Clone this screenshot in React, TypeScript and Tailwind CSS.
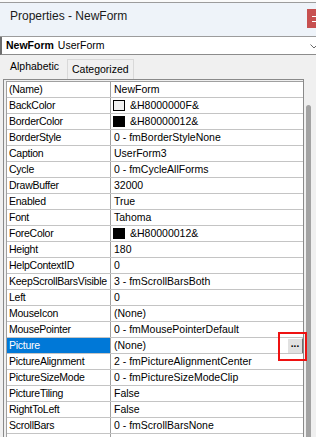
import React from "react";

type Row = { name: string; value: string; swatch?: string };

const rows: Row[] = [
  { name: "(Name)", value: "NewForm" },
  { name: "BackColor", value: "&H8000000F&", swatch: "#f0f0f0" },
  { name: "BorderColor", value: "&H80000012&", swatch: "#000000" },
  { name: "BorderStyle", value: "0 - fmBorderStyleNone" },
  { name: "Caption", value: "UserForm3" },
  { name: "Cycle", value: "0 - fmCycleAllForms" },
  { name: "DrawBuffer", value: "32000" },
  { name: "Enabled", value: "True" },
  { name: "Font", value: "Tahoma" },
  { name: "ForeColor", value: "&H80000012&", swatch: "#000000" },
  { name: "Height", value: "180" },
  { name: "HelpContextID", value: "0" },
  { name: "KeepScrollBarsVisible", value: "3 - fmScrollBarsBoth" },
  { name: "Left", value: "0" },
  { name: "MouseIcon", value: "(None)" },
  { name: "MousePointer", value: "0 - fmMousePointerDefault" },
  { name: "Picture", value: "(None)" },
  { name: "PictureAlignment", value: "2 - fmPictureAlignmentCenter" },
  { name: "PictureSizeMode", value: "0 - fmPictureSizeModeClip" },
  { name: "PictureTiling", value: "False" },
  { name: "RightToLeft", value: "False" },
  { name: "ScrollBars", value: "0 - fmScrollBarsNone" },
];

function PropRow({ row }: { row: Row }) {
  const selected = row.name === "Picture";
  return (
    <div className="flex h-[16px] shrink-0 border-b border-[#c4c4c4] bg-white">
      <div
        className={[
          "w-[104px] shrink-0 overflow-hidden whitespace-nowrap border-r border-[#a0a0a0] pl-[2px] leading-[15px] tracking-[-0.25px]",
          selected ? "bg-[#0078d7] text-white" : "",
        ].join(" ")}
      >
        {row.name}
      </div>
      <div className="flex min-w-0 flex-1 items-center overflow-hidden whitespace-nowrap pl-[3px] leading-[15px]">
        {row.swatch && (
          <span
            className="ml-[-1px] mr-[5px] inline-block h-[11px] w-[12px] shrink-0 border border-black"
            style={{ backgroundColor: row.swatch }}
          />
        )}
        <span>{row.value}</span>
        {selected && (
          <span className="ml-auto flex h-[16px] w-[16px] items-center justify-center border border-t-white border-l-white border-b-[#6d6d6d] border-r-[#6d6d6d] bg-[#e1e1e1] pb-[3px] text-[10px] font-bold leading-none">
            ...
          </span>
        )}
      </div>
    </div>
  );
}

export default function App() {
  return (
    <div className="relative h-[437px] w-[316px] overflow-hidden bg-[#f0f0f0] font-['Liberation_Sans',Arial,sans-serif] text-[10.5px] text-black">
      <div className="h-[2px] bg-[#fafafa]" />

      {/* title bar */}
      <div className="flex h-[35px] items-start justify-between border-y border-[#9c9c9c] bg-[#eef3f9]">
        <div className="ml-[10px] mt-[5px] text-[12px] leading-[16px] text-[#1a1a1a]">
          Properties - NewForm
        </div>
        <div className="mt-[6px] flex h-[19px] w-[9px] items-center bg-[#c75050] pl-[5px]">
          <svg width="4" height="6" viewBox="0 0 4 6">
            <path d="M0 0.5 L4 0.5 M0 5.5 L4 5.5" stroke="#ffffff" strokeWidth="1" />
          </svg>
        </div>
      </div>

      {/* object dropdown */}
      <div className="flex h-[18px] items-center border-b border-l-2 border-b-[#8c8c8c] border-l-[#6e6e6e] bg-white pl-[4px]">
        <span className="font-bold">NewForm</span>
        <span className="ml-[4px]">UserForm</span>
        <svg className="ml-auto mr-[-2px] mt-[2px]" width="8" height="5" viewBox="0 0 8 5">
          <path d="M0.5 0.5 L4 4 L7.5 0.5" fill="none" stroke="#6a6a6a" strokeWidth="1" />
        </svg>
      </div>

      {/* tabs */}
      <div className="flex h-[24px] items-end pl-[4px]">
        <div className="flex h-[24px] w-[63px] items-center pb-[1px] pl-[6px]">Alphabetic</div>
        <div className="flex h-[20px] w-[67px] items-center border-x border-t border-[#d9d9d9] pl-[4px] pt-[1px]">
          Categorized
        </div>
      </div>

      {/* grid + scrollbar */}
      <div className="flex h-[358px]">
        <div className="ml-[3px] flex w-[301px] shrink-0 flex-col border-l border-r border-t border-[#8a8a8a] pl-[2px] pt-[1px]">
          <div className="flex flex-1 flex-col overflow-hidden border-l border-t border-[#a0a0a0] bg-white">
            {rows.map((r) => (
              <PropRow key={r.name} row={r} />
            ))}
            <div className="flex flex-1">
              <div className="w-[104px] border-r border-[#a0a0a0]" />
            </div>
          </div>
        </div>
        <div className="flex flex-1 flex-col pl-[2px] pt-[26px]">
          <div className="w-[5px] flex-1 rounded-t-[3px] bg-[#a3a3a3]" />
        </div>
      </div>

      {/* highlight annotation */}
      <div className="absolute left-[278px] top-[332px] h-[29px] w-[29px] border-2 border-[#ee1111]" />
    </div>
  );
}
